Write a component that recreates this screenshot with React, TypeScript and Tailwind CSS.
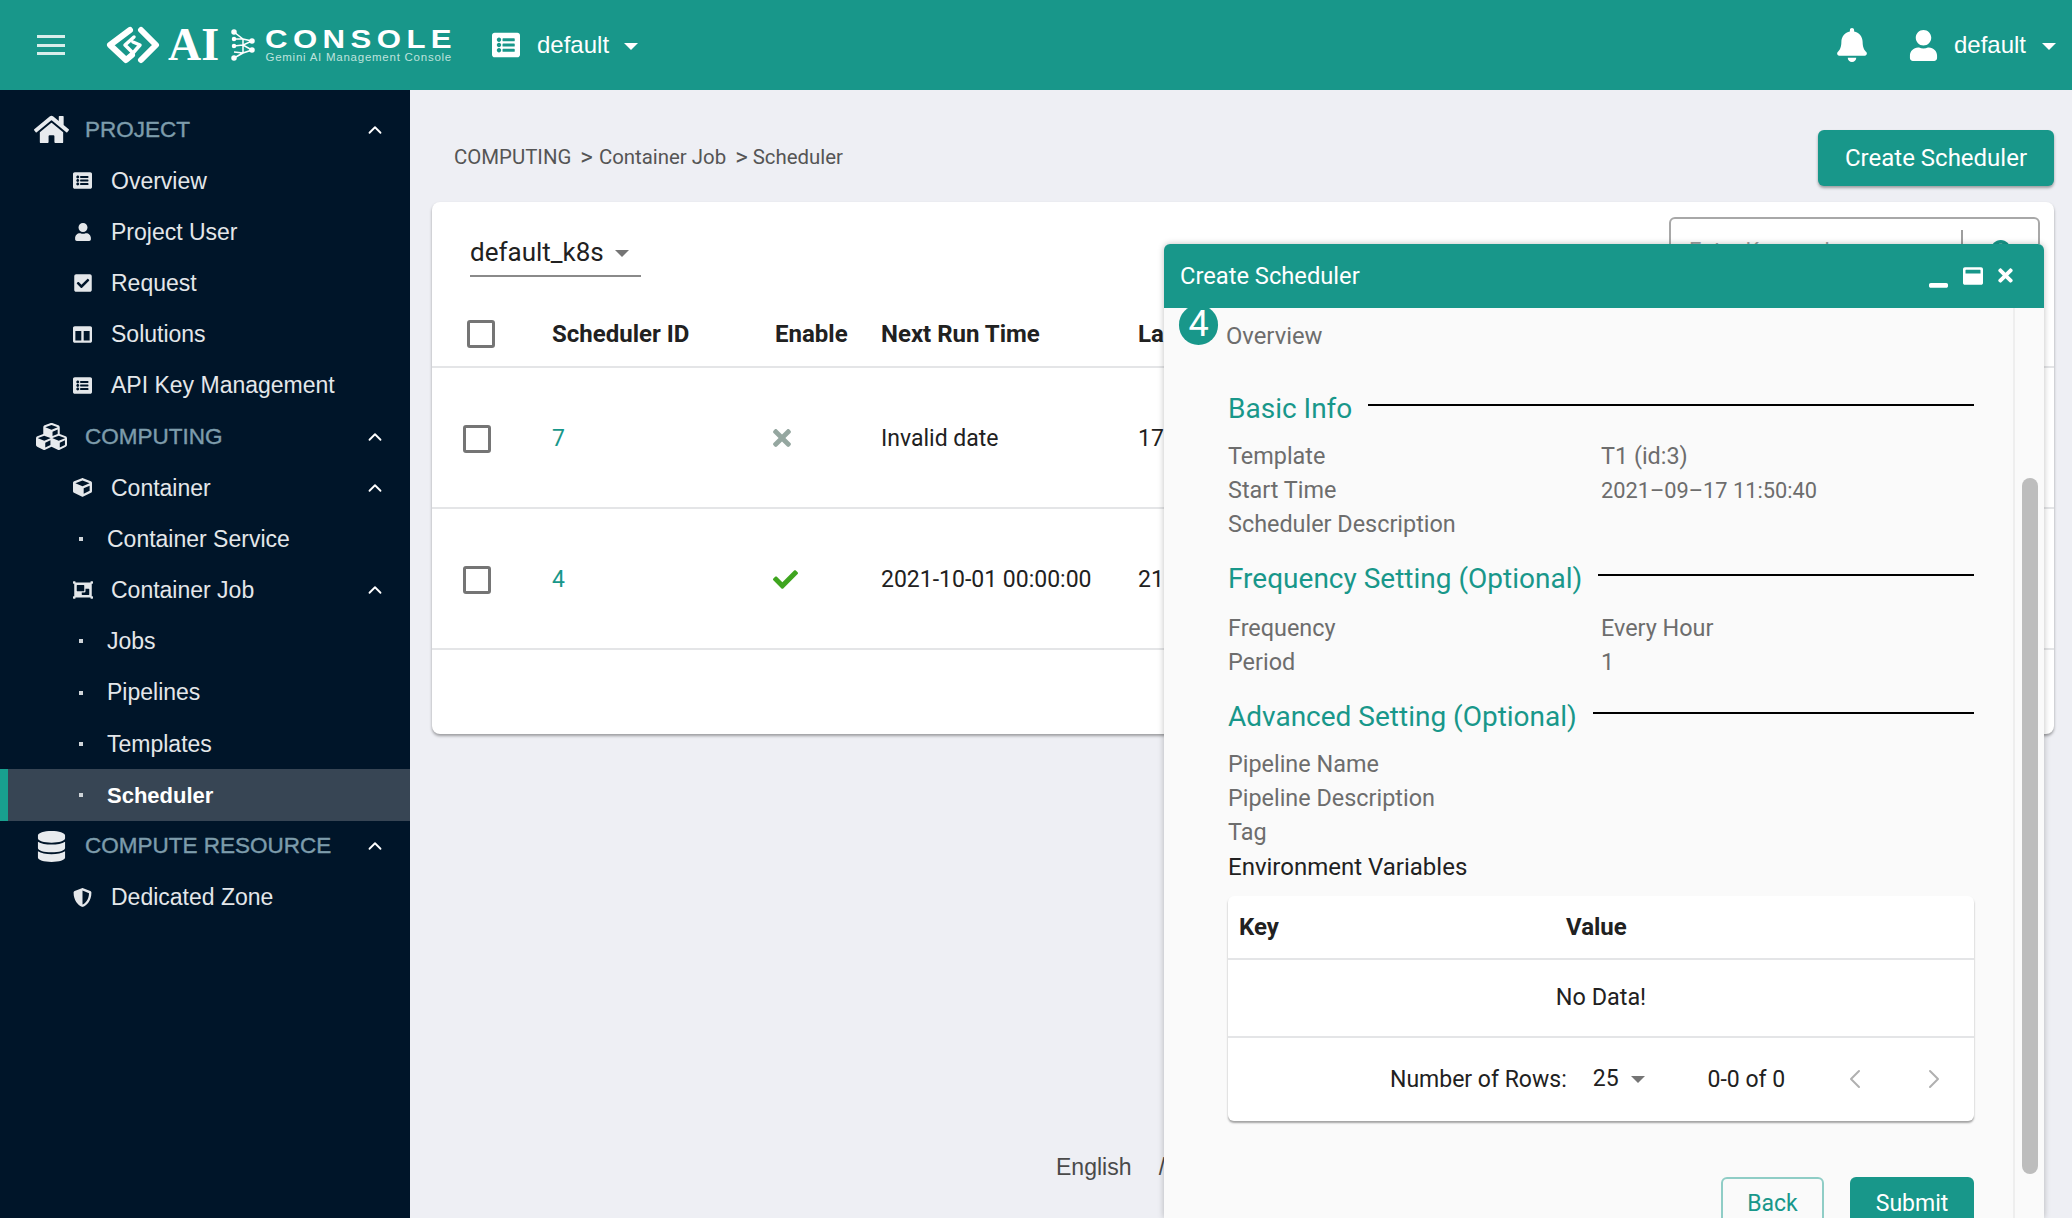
import { ChevronUp, ChevronLeft, ChevronRight } from 'lucide-react';
import {
  FaHome, FaListAlt, FaUser, FaCheckSquare, FaColumns, FaCubes, FaCube, FaObjectGroup,
  FaDatabase, FaShieldAlt, FaBell, FaCheck, FaTimes, FaWindowMaximize, FaWindowMinimize, FaSearch,
} from 'react-icons/fa';

const sans = "font-['Liberation_Sans',Arial,sans-serif]";
const roboto = "font-['Roboto',sans-serif]";

function Caret({ className }: { className: string }) {
  return <span className={`inline-block w-0 h-0 border-x-[7px] border-x-transparent border-t-[7px] ${className}`} />;
}

function Logo() {
  return (
    <div className="flex items-center ml-[41px] w-[346px] h-[40px]">
      <svg width="54" height="38" viewBox="0 0 54 38" fill="none" stroke="white" strokeWidth="6" strokeLinejoin="round" strokeLinecap="round" className="shrink-0">
        <path d="M24 4 L4 19 L20 34 L26 29" />
        <path d="M35 4 L50 19 L35 34" />
        <path d="M28 11 L19 19 L27 27 L34 19 L27 16" strokeWidth="3.5" />
      </svg>
      <span className="ml-[8px] w-[56px] text-white font-['Liberation_Serif',serif] font-bold text-[46px] leading-none">AI</span>
      <svg width="24" height="32" viewBox="0 0 24 32" stroke="white" strokeWidth="1.5" fill="white" className="ml-[8px] shrink-0">
        <path d="M3 3 L12 10 L21 12 L12 16 L21 21 L12 24 L3 29 M3 10 L12 10 L12 16 L12 24 M3 17 L12 16 M3 23 L12 24" fill="none" />
        <circle cx="3" cy="3" r="2" /><circle cx="3" cy="10" r="1.5" /><circle cx="21" cy="12" r="2" />
        <circle cx="21" cy="21" r="2" /><circle cx="3" cy="17" r="1.5" /><circle cx="3" cy="29" r="2" />
      </svg>
      <div className="ml-[10px] flex flex-col">
        <span className={`${sans} text-white font-bold text-[26px] leading-[22px] tracking-[4.5px] [transform:scaleX(1.2)] origin-left whitespace-nowrap`}>CONSOLE</span>
        <span className={`${sans} text-[#bfe3dd] text-[11.5px] leading-[12px] mt-[1px] tracking-[0.75px] whitespace-nowrap`}>Gemini AI Management Console</span>
      </div>
    </div>
  );
}

function Header() {
  return (
    <header className={`h-[90px] shrink-0 bg-[#18978a] flex items-center text-white ${sans}`}>
      <div className="ml-[37px] w-[28px] flex flex-col gap-[5.5px]">
        <span className="h-[3px] bg-[#d8eeeb]" />
        <span className="h-[3px] bg-[#d8eeeb]" />
        <span className="h-[3px] bg-[#d8eeeb]" />
      </div>
      <Logo />
      <FaListAlt className="ml-[40px] text-[28px]" />
      <span className="ml-[17px] text-[24px]">default</span>
      <Caret className="ml-[15px] mt-[3px] border-t-white" />
      <div className="ml-auto flex items-center">
        <FaBell className="text-[34px]" />
        <FaUser className="ml-[39px] text-[31px]" />
        <span className="ml-[15px] text-[24px]">default</span>
        <Caret className="ml-[16px] mr-[16px] mt-[3px] border-t-white" />
      </div>
    </header>
  );
}

type NavRow = { label: string; kind: 'section' | 'item' | 'leaf'; icon?: React.ReactNode; open?: boolean; active?: boolean };

const navRows: NavRow[] = [
  { label: 'PROJECT', kind: 'section', icon: <FaHome className="text-[35px]" />, open: true },
  { label: 'Overview', kind: 'item', icon: <FaListAlt className="text-[19px]" /> },
  { label: 'Project User', kind: 'item', icon: <FaUser className="text-[18px]" /> },
  { label: 'Request', kind: 'item', icon: <FaCheckSquare className="text-[20px]" /> },
  { label: 'Solutions', kind: 'item', icon: <FaColumns className="text-[19px]" /> },
  { label: 'API Key Management', kind: 'item', icon: <FaListAlt className="text-[19px]" /> },
  { label: 'COMPUTING', kind: 'section', icon: <FaCubes className="text-[31px]" />, open: true },
  { label: 'Container', kind: 'item', icon: <FaCube className="text-[19px]" />, open: true },
  { label: 'Container Service', kind: 'leaf' },
  { label: 'Container Job', kind: 'item', icon: <FaObjectGroup className="text-[20px]" />, open: true },
  { label: 'Jobs', kind: 'leaf' },
  { label: 'Pipelines', kind: 'leaf' },
  { label: 'Templates', kind: 'leaf' },
  { label: 'Scheduler', kind: 'leaf', active: true },
  { label: 'COMPUTE RESOURCE', kind: 'section', icon: <FaDatabase className="text-[31px]" />, open: true },
  { label: 'Dedicated Zone', kind: 'item', icon: <FaShieldAlt className="text-[19px]" /> },
];

function Sidebar() {
  return (
    <aside className={`w-[410px] shrink-0 bg-[#001529] pt-[14px] ${sans}`}>
      {navRows.map(row => (
        <div
          key={row.label}
          className={`relative h-[51.2px] flex items-center ${row.active ? 'bg-[#374554] border-l-[8px] border-[#18a08e]' : ''}`}
        >
          {row.kind === 'section' && (
            <>
              <span className="w-[85px] pl-[17px] shrink-0 flex justify-center text-[#e8ebee]">{row.icon}</span>
              <span className="text-[22.5px] text-[#7d9cab] [-webkit-text-stroke:0.4px_#7d9cab]">{row.label}</span>
            </>
          )}
          {row.kind === 'item' && (
            <>
              <span className="w-[111px] pl-[72px] pr-[18px] shrink-0 flex justify-center text-[#e4e7ea]">{row.icon}</span>
              <span className="text-[23px] text-[#e4e7ea]">{row.label}</span>
            </>
          )}
          {row.kind === 'leaf' && (
            <>
              <span className={`${row.active ? 'ml-[71px]' : 'ml-[79px]'} w-[4px] h-[4px] bg-[#cfd4d8] shrink-0`} />
              <span className={`ml-[24px] ${row.active ? 'text-[22px] font-bold text-white' : 'text-[23px] text-[#e4e7ea]'}`}>{row.label}</span>
            </>
          )}
          {row.open && <ChevronUp className="absolute left-[364px] text-white" size={22} strokeWidth={2} />}
        </div>
      ))}
    </aside>
  );
}

function Checkbox({ className }: { className: string }) {
  return <span className={`block w-[28px] h-[28px] border-[3px] border-[#757575] rounded-[3px] shrink-0 ${className}`} />;
}

function SchedulerRow({ id, enabled, next, last }: { id: string; enabled: boolean; next: string; last: string }) {
  return (
    <div className="h-[141px] pt-[3px] flex items-center border-b-2 border-[#e4e5e7] text-[23px] text-[#212121]">
      <Checkbox className="ml-[31px]" />
      <span className="ml-[61px] w-[223px] text-[#18978a]">{id}</span>
      <span className="w-[106px] -ml-[2px] mr-[2px]">
        {enabled ? <FaCheck className="text-[25px] text-[#3fa51f] -mt-[2px]" /> : <FaTimes className="-ml-[4px] text-[26px] text-[#95a7a0] -mt-[2px]" />}
      </span>
      <span className="w-[257px] whitespace-nowrap">{next}</span>
      <span>{last}</span>
    </div>
  );
}

function SchedulerCard() {
  return (
    <div className="mr-[18px] ml-[22px] h-[532px] bg-white rounded-[8px] shadow-[0_2px_3px_rgba(0,0,0,0.35)] overflow-hidden">
      <div className="h-[109px] flex items-start">
        <div className="ml-[38px] mt-[27px] w-[171px] h-[48px] border-b-2 border-[#8a8a8a] flex items-center text-[26px] text-[#212121]">
          default_k8s
          <Caret className="ml-[11px] mt-[3px] border-t-[#757575]" />
        </div>
        <div className="ml-auto mr-[14px] mt-[15px] w-[371px] h-[70px] border-2 border-[#a8a8a8] rounded-[6px] flex items-center">
          <span className="ml-[18px] w-[272px] -mt-[3px] text-[#9e9e9e] text-[22px]">Enter Keyword</span>
          <span className="h-[44px] w-[2px] bg-[#9e9e9e]" />
          <FaSearch className="ml-[28px] text-[#18978a] text-[24px]" />
        </div>
      </div>
      <div className="h-[57px] pb-[10px] flex items-center text-[24px] font-bold text-[#212121] border-b-2 border-[#e4e5e7]">
        <Checkbox className="ml-[35px]" />
        <span className="ml-[57px] w-[223px]">Scheduler ID</span>
        <span className="w-[106px]">Enable</span>
        <span className="w-[257px]">Next Run Time</span>
        <span>La</span>
      </div>
      <SchedulerRow id="7" enabled={false} next="Invalid date" last="17" />
      <SchedulerRow id="4" enabled next="2021-10-01 00:00:00" last="21" />
    </div>
  );
}

function SectionTitle({ children, className }: { children: string; className: string }) {
  return (
    <div className={`flex items-start ${className}`}>
      <h3 className="text-[28px] leading-[32px] text-[#18978a] whitespace-nowrap">{children}</h3>
      <span className="ml-[16px] flex-1 h-[2px] bg-black mt-[11px]" />
    </div>
  );
}

function Field({ label, value, narrow }: { label: string; value?: string; narrow?: boolean }) {
  return (
    <div className="h-[34px] flex items-center text-[23.4px] text-[#6d6d6d]">
      <span className="w-[373px]">{label}</span>
      {value && <span className={narrow ? 'text-[21.8px]' : ''}>{value}</span>}
    </div>
  );
}

function SchedulerDialog() {
  return (
    <div className={`absolute left-[1164px] top-[244px] w-[880px] h-[974px] bg-[#fafafa] rounded-t-[6px] shadow-[0_0_6px_rgba(0,0,0,0.25)] overflow-hidden flex flex-col ${roboto}`}>
      <div className="relative h-[64px] shrink-0 bg-[#18978a] flex items-center text-white z-10">
        <span className="ml-[16px] mt-[1px] text-[23.7px]">Create Scheduler</span>
        <FaWindowMinimize className="ml-auto text-[19px] mt-[6px]" />
        <FaWindowMaximize className="ml-[15px] text-[20px] -mt-[1px]" />
        <FaTimes className="ml-[12px] mr-[28px] text-[21px] -mt-[1px]" />
      </div>
      <div className="relative flex-1 border-r-2 border-[#eeeeee] mr-[29px]">
        <div className="absolute -top-[3px] left-[15px] flex items-start">
          <span className="w-[39px] h-[40px] rounded-full bg-[#18978a] text-white text-[36px] leading-[38px] text-center">4</span>
          <span className="ml-[8px] mt-[18px] text-[23.8px] leading-[26px] text-[#6d6d6d]">Overview</span>
        </div>
        <div className="pl-[64px] pr-[39px] pt-[85px]">
          <SectionTitle className="h-[32px]">Basic Info</SectionTitle>
          <div className="mt-[15px]">
            <Field label="Template" value="T1 (id:3)" />
            <Field label="Start Time" value="2021–09–17 11:50:40" narrow />
            <Field label="Scheduler Description" />
          </div>
          <SectionTitle className="mt-[21px] h-[32px]">Frequency Setting (Optional)</SectionTitle>
          <div className="mt-[17px]">
            <Field label="Frequency" value="Every Hour" />
            <Field label="Period" value="1" />
          </div>
          <SectionTitle className="mt-[21px] h-[32px]">Advanced Setting (Optional)</SectionTitle>
          <div className="mt-[15px]">
            <Field label="Pipeline Name" />
            <Field label="Pipeline Description" />
            <Field label="Tag" />
            <div className="h-[34px] flex items-center text-[24px] text-[#212121]">Environment Variables</div>
          </div>
          <div className="mt-[12px] h-[225px] bg-white rounded-[6px] shadow-[0_2px_2px_rgba(0,0,0,0.35)] text-[23.4px] text-[#212121]">
            <div className="h-[64px] flex items-center border-b-2 border-[#e4e5e7] font-bold text-[24px]">
              <span className="ml-[11px] w-[327px]">Key</span>
              <span>Value</span>
            </div>
            <div className="h-[78px] flex items-center justify-center border-b-2 border-[#e4e5e7]">No Data!</div>
            <div className="h-[82px] flex items-center text-[23px]">
              <span className="ml-[162px] mt-[3px]">Number of Rows:</span>
              <span className="ml-[26px]">25</span>
              <Caret className="ml-[12px] border-t-[#757575]" />
              <span className="ml-[63px] mt-[2px]">0-0 of 0</span>
              <ChevronLeft className="ml-[54px] text-[#b0b0b0]" size={32} strokeWidth={1.5} />
              <ChevronRight className="ml-[47px] text-[#b0b0b0]" size={32} strokeWidth={1.5} />
            </div>
          </div>
          <div className="mt-[56px] flex justify-end text-[23px]">
            <button className="w-[103px] h-[70px] pb-[16px] border-2 border-[#8fcdc6] rounded-[6px] text-[#18978a]">Back</button>
            <button className="ml-[26px] w-[124px] h-[70px] pb-[16px] bg-[#18978a] rounded-[6px] text-white">Submit</button>
          </div>
        </div>
      </div>
      <span className="absolute left-[858px] top-[234px] w-[16px] h-[696px] rounded-full bg-[#bdbdbd]" />
    </div>
  );
}

export default function App() {
  return (
    <div className="relative w-[2072px] h-[1218px] overflow-hidden flex flex-col bg-[#eeeff4]">
      <Header />
      <div className="flex-1 flex min-h-0">
        <Sidebar />
        <main className={`flex-1 flex flex-col min-w-0 ${roboto}`}>
          <div className="h-[112px] pt-[40px] flex items-start justify-between">
            <div className="ml-[44px] mt-[12px] flex items-center text-[20.4px] text-[#555555] whitespace-nowrap">
              <span>COMPUTING</span>
              <span className="ml-[9px] text-[24px] leading-none">&gt;</span>
              <span className="ml-[6px]">Container Job</span>
              <span className="ml-[9px] text-[24px] leading-none">&gt;</span>
              <span className="ml-[5px]">Scheduler</span>
            </div>
            <button className="mr-[18px] w-[236px] h-[56px] pb-[1px] bg-[#18978a] rounded-[6px] text-white text-[24px] shadow-[0_2px_3px_rgba(0,0,0,0.35)]">Create Scheduler</button>
          </div>
          <SchedulerCard />
          <div className={`ml-[646px] mt-[416px] text-[23px] text-[#4a4a4a] whitespace-nowrap ${sans}`}>
            English <span className="ml-[21px]">/</span>
          </div>
        </main>
      </div>
      <SchedulerDialog />
    </div>
  );
}
